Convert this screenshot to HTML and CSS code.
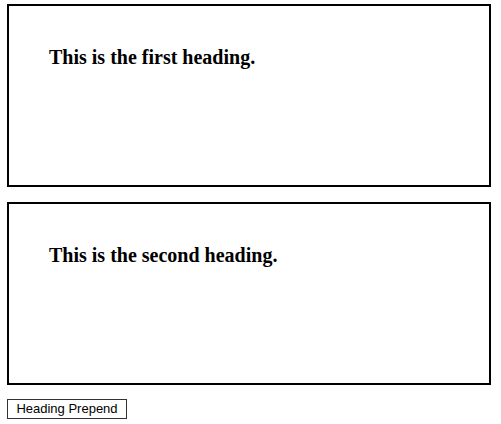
FILE: index.html
```html
<!DOCTYPE html>
<html>
<head>
<link rel="stylesheet" href="styles.css">
</head>
<body>
<div class="page">
  <div class="box"><h3 class="heading">This is the first heading.</h3></div>
  <div class="box"><h3 class="heading">This is the second heading.</h3></div>
  <button class="btn">Heading Prepend</button>
</div>
</body>
</html>
```

FILE: styles.css
```css
html, body {
  margin: 0;
  padding: 0;
  background: #fff;
}
.page {
  padding: 4px 0 0 7px;
  display: flex;
  flex-direction: column;
  align-items: flex-start;
  gap: 15px;
}
.box {
  box-sizing: border-box;
  width: 484px;
  height: 183px;
  border: 2px solid #000;
  padding: 40px;
}
.heading {
  margin: 0;
  font-family: "Liberation Serif", "Times New Roman", serif;
  font-weight: bold;
  font-size: 20px;
  line-height: 22px;
  color: #000;
}
.btn {
  margin-top: -1px;
  box-sizing: border-box;
  width: 120px;
  height: 20px;
  padding: 0;
  border: 1px solid #333;
  background: #fff;
  font-family: "Liberation Sans", Arial, sans-serif;
  font-size: 13px;
  line-height: 18px;
  color: #000;
}
```
